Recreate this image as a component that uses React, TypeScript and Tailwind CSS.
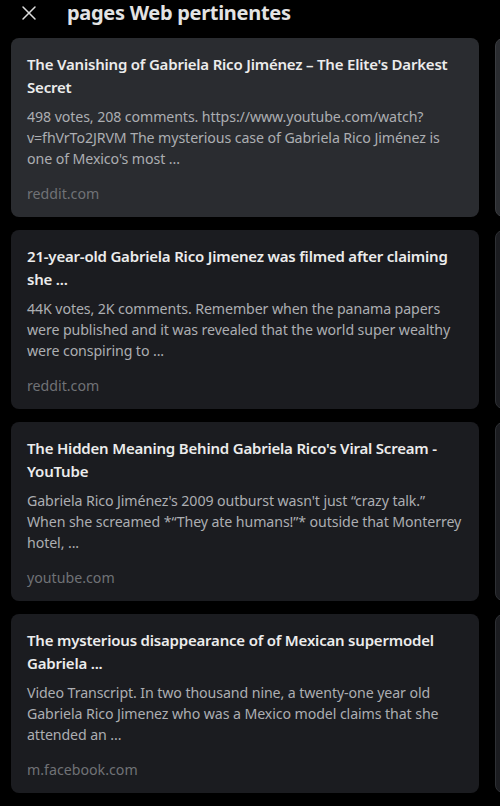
import { X } from 'lucide-react';

const results = [
  {
    title: 'The Vanishing of Gabriela Rico Jiménez – The Elite\'s Darkest Secret',
    snippet:
      "498 votes, 208 comments. https://www.youtube.com/watch?v=fhVrTo2JRVM The mysterious case of Gabriela Rico Jiménez is one of Mexico's most ...",
    domain: 'reddit.com',
    active: true,
  },
  {
    title: '21-year-old Gabriela Rico Jimenez was filmed after claiming she ...',
    snippet:
      '44K votes, 2K comments. Remember when the panama papers were published and it was revealed that the world super wealthy were conspiring to ...',
    domain: 'reddit.com',
  },
  {
    title: "The Hidden Meaning Behind Gabriela Rico's Viral Scream - YouTube",
    snippet:
      'Gabriela Rico Jiménez\'s 2009 outburst wasn\'t just “crazy talk.” When she screamed *“They ate humans!”* outside that Monterrey hotel, ...',
    domain: 'youtube.com',
  },
  {
    title: 'The mysterious disappearance of of Mexican supermodel Gabriela ...',
    snippet:
      'Video Transcript. In two thousand nine, a twenty-one year old Gabriela Rico Jimenez who was a Mexico model claims that she attended an ...',
    domain: 'm.facebook.com',
  },
];

export default function App() {
  return (
    <div
      className="w-[500px] h-[806px] bg-black overflow-hidden flex flex-col"
      style={{ fontFamily: '"Noto Sans", "Open Sans", sans-serif' }}
    >
      {/* Header */}
      <div className="h-[25px] flex items-center shrink-0">
        <button className="ml-[17px] w-[24px] h-[24px] flex items-center justify-center text-[#dcdcdc]">
          <X size={24} strokeWidth={1.5} />
        </button>
        <h1 className="ml-[26px] text-[20px] font-bold text-[#e3e3e3] leading-none tracking-[-0.3px]">
          pages Web pertinentes
        </h1>
      </div>

      <div className="flex mt-[13px] gap-[16px]">
        {/* Results column */}
        <div className="flex flex-col gap-[13px] ml-[11px] w-[468px] shrink-0">
          {results.map((r, i) => (
            <div
              key={i}
              className={`rounded-[8px] px-4 pt-[15px] pb-[13px] ${r.active ? 'bg-[#2a2c30]' : 'bg-[#1b1c20]'}`}
            >
              <div className="text-[15px] leading-[23px] font-semibold text-[#ececec] tracking-[-0.2px]">
                {r.title}
              </div>
              <div className="mt-[7px] text-[14.2px] leading-[21px] text-[#acaeb2] tracking-[-0.1px]">
                {r.snippet}
              </div>
              <div className="mt-[14px] text-[14.2px] leading-[21px] text-[#707276]">{r.domain}</div>
            </div>
          ))}
        </div>

        {/* Next column peeking */}
        <div className="flex flex-col gap-[13px] shrink-0 w-[468px]">
          <div className="h-[179px] rounded-[8px] bg-[#2a2c30] border border-[#3a3c40]" />
          <div className="h-[179px] rounded-[8px] bg-[#1b1c20] border border-[#2e3034]" />
          <div className="h-[179px] rounded-[8px] bg-[#1b1c20] border border-[#2e3034]" />
          <div className="h-[179px] rounded-[8px] bg-[#1b1c20] border border-[#2e3034]" />
        </div>
      </div>
    </div>
  );
}
